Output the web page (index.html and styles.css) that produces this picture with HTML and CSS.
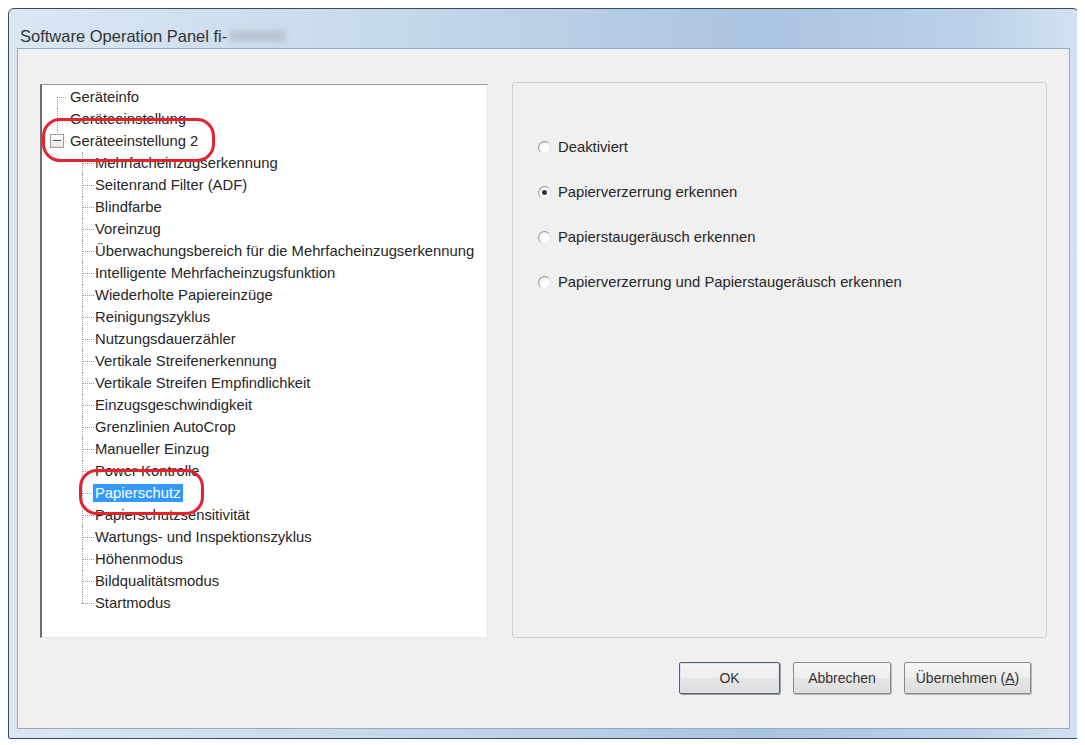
FILE: index.html
```html
<!DOCTYPE html>
<html>
<head>
    <title>Software Operation Panel</title>
    <link rel="stylesheet" href="styles.css">
</head>
<body>
    <div class="window">
        <div class="titlebar">
            <span class="title">Software Operation Panel fi-</span>
            <span class="model"></span>
        </div>
        <div class="client">
            <div class="panes">
                <div class="tree">
                    <ul>
                        <li class="row root first"><span class="label">Geräteinfo</span></li>
                        <li class="row root"><span class="label">Geräteeinstellung</span></li>
                        <li class="row root last">
                            <span class="toggle"></span>
                            <span class="label">Geräteeinstellung 2</span>
                            <span class="mark mark-group"></span>
                        </li>
                        <li class="row child"><span class="label">Mehrfacheinzugserkennung</span></li>
                        <li class="row child"><span class="label">Seitenrand Filter (ADF)</span></li>
                        <li class="row child"><span class="label">Blindfarbe</span></li>
                        <li class="row child"><span class="label">Voreinzug</span></li>
                        <li class="row child"><span class="label">Überwachungsbereich für die Mehrfacheinzugserkennung</span></li>
                        <li class="row child"><span class="label">Intelligente Mehrfacheinzugsfunktion</span></li>
                        <li class="row child"><span class="label">Wiederholte Papiereinzüge</span></li>
                        <li class="row child"><span class="label">Reinigungszyklus</span></li>
                        <li class="row child"><span class="label">Nutzungsdauerzähler</span></li>
                        <li class="row child"><span class="label">Vertikale Streifenerkennung</span></li>
                        <li class="row child"><span class="label">Vertikale Streifen Empfindlichkeit</span></li>
                        <li class="row child"><span class="label">Einzugsgeschwindigkeit</span></li>
                        <li class="row child"><span class="label">Grenzlinien AutoCrop</span></li>
                        <li class="row child"><span class="label">Manueller Einzug</span></li>
                        <li class="row child"><span class="label">Power Kontrolle</span></li>
                        <li class="row child">
                            <span class="label selected">Papierschutz</span>
                            <span class="mark mark-item"></span>
                        </li>
                        <li class="row child"><span class="label">Papierschutzsensitivität</span></li>
                        <li class="row child"><span class="label">Wartungs- und Inspektionszyklus</span></li>
                        <li class="row child"><span class="label">Höhenmodus</span></li>
                        <li class="row child"><span class="label">Bildqualitätsmodus</span></li>
                        <li class="row child last"><span class="label">Startmodus</span></li>
                    </ul>
                </div>
                <div class="options">
                    <div class="option"><span class="radio"></span>Deaktiviert</div>
                    <div class="option"><span class="radio checked"></span>Papierverzerrung erkennen</div>
                    <div class="option"><span class="radio"></span>Papierstaugeräusch erkennen</div>
                    <div class="option"><span class="radio"></span>Papierverzerrung und Papierstaugeräusch erkennen</div>
                </div>
            </div>
            <div class="buttons">
                <button class="btn btn-ok">OK</button>
                <button class="btn btn-cancel">Abbrechen</button>
                <button class="btn btn-apply">Übernehmen (<u>A</u>)</button>
            </div>
        </div>
    </div>
</body>
</html>
```

FILE: styles.css
```css
body { margin: 8px; background: #ffffff; font-family: "Liberation Sans", Arial, sans-serif; color: #262626; }

/* window frame */
.window { width: 1069px; height: 729px; border: 1px solid #3c4a5a; border-radius: 6px 6px 2px 2px; box-shadow: 1px 1px 0 #1f2a36; background: linear-gradient(to right, #dbe7f3 0%, #c6d9ec 35%, #aac5e0 70%, #bad1e9 90%, #d3e2f1 100%); display: flex; flex-direction: column; }
.titlebar { height: 39px; padding: 15px 0 0 11px; box-sizing: border-box; display: flex; align-items: center; gap: 3px; }
.title { font-size: 16.5px; color: #333; }
.model { width: 56px; height: 12px; background: #bcc7d6; filter: blur(2px); }

.client { flex: 1; margin: 0 8px 9px 8px; background: #f0f0f0; border: 1px solid #95a9bf; padding: 33px 22px 0 22px; display: flex; flex-direction: column; }
.panes { display: flex; gap: 24px; align-items: flex-start; }

/* tree view */
.tree { width: 445px; height: 551px; margin-top: 2px; background: #fff; border-top: 1px solid #9c9c9c; border-left: 2px solid #6e6e6e; border-right: 1px solid #e6e6e6; border-bottom: 1px solid #e6e6e6; padding-top: 1px; font-size: 14.8px; }
.tree ul { list-style: none; margin: 0; padding: 0; }
.row { position: relative; height: 22px; line-height: 22px; white-space: nowrap; }
.row::before { content: ""; position: absolute; top: 0; bottom: 0; border-left: 1px dotted #9a9a9a; }
.row::after { content: ""; position: absolute; top: 11px; border-top: 1px dotted #9a9a9a; }
.row.first::before { top: 11px; }
.row.last::before { bottom: 11px; }
.root { padding-left: 26px; }
.root::before, .root::after { left: 15px; }
.root::after { width: 9px; }
.child { padding-left: 51px; }
.child::before, .child::after { left: 40px; }
.child::after { width: 12px; }
.label { padding: 1px 2px; }
.label.selected { background: #3399ff; color: #fff; }

.toggle { position: absolute; left: 8px; top: 4px; width: 12px; height: 12px; border: 1px solid #9b9b9b; background: linear-gradient(#ffffff, #e6e6e6); z-index: 1; }
.toggle::after { content: ""; position: absolute; left: 2px; top: 5px; width: 8px; height: 1px; background: #555; }

/* red annotation rings */
.mark { position: absolute; border: 3px solid #e2252c; border-radius: 18px; z-index: 2; }
.mark-group { left: 0; top: -12px; width: 167px; height: 38px; }
.mark-item { left: 37px; top: -13px; width: 119px; height: 40px; }

/* option group */
.options { width: 535px; height: 556px; box-sizing: border-box; background: #f0f0f0; border: 1px solid #d2d2d2; border-radius: 3px; padding: 53px 0 0 25px; display: flex; flex-direction: column; gap: 23px; font-size: 14.8px; }
.option { height: 22px; display: flex; align-items: center; gap: 7px; white-space: nowrap; }
.radio { width: 11px; height: 11px; border: 1px solid #9a9a9a; border-radius: 50%; background: radial-gradient(circle at 65% 65%, #ffffff 40%, #dcdcdc 100%); border-right-color: #e4e4e4; border-bottom-color: #e4e4e4; position: relative; }
.radio.checked::after { content: ""; position: absolute; left: 3px; top: 3px; width: 5px; height: 5px; border-radius: 50%; background: #333; }

/* dialog buttons */
.buttons { display: flex; justify-content: flex-end; gap: 13px; margin: 24px 16px 0 0; }
.btn { height: 32px; font-family: "Liberation Sans", Arial, sans-serif; font-size: 14px; color: #333; border: 1px solid #8a8a8a; border-radius: 2px; background: linear-gradient(#f6f6f6 0%, #eeeeee 50%, #e6e6e6 51%, #dedede 100%); box-shadow: 1px 1px 0 #b8b8b8; padding: 0; }
.btn-ok { width: 101px; border-color: #5e5e5e; box-shadow: inset 0 0 0 1px #d6e6f6, 1px 1px 0 #a0a0a0; }
.btn-cancel { width: 98px; }
.btn-apply { width: 127px; }
```
